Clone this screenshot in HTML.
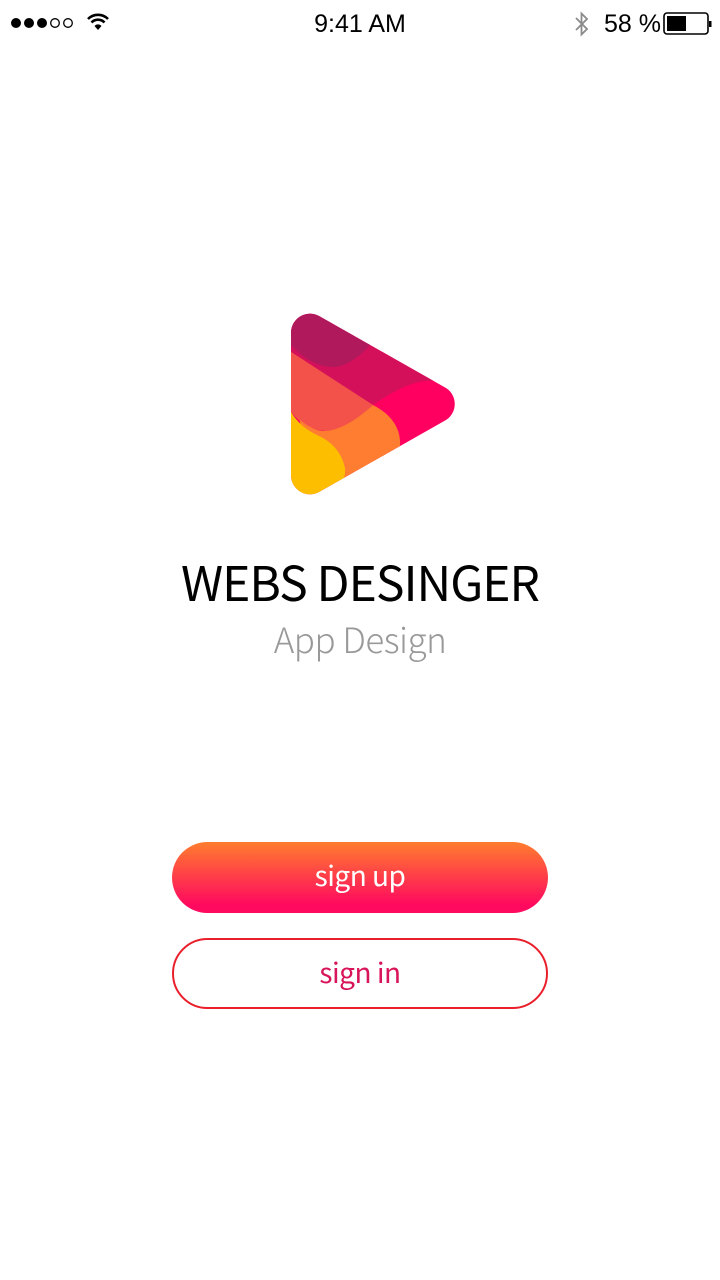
<!DOCTYPE html>
<html><head><meta charset="utf-8">
<style>
html,body{margin:0;padding:0;background:#fff;}
body{width:720px;height:1280px;position:relative;overflow:hidden;font-family:"Liberation Sans",sans-serif;}
.abs{position:absolute;}
.time{left:0;width:720px;top:10px;text-align:center;font-size:25px;color:#000;}
.pct{left:604px;top:10px;font-size:25px;color:#000;}
.title{left:0;width:720px;top:547px;text-align:center;font-family:"Noto Sans CJK SC","Liberation Sans",sans-serif;font-size:48px;color:#000;line-height:66px;letter-spacing:-1px;}
.sub{left:0;width:720px;top:614px;text-align:center;font-family:"Noto Sans CJK SC","Liberation Sans",sans-serif;font-size:35px;font-weight:300;color:#999;line-height:50px;letter-spacing:-0.5px;}
.btn{left:172px;width:376px;height:71px;border-radius:36px;box-sizing:border-box;text-align:center;font-family:"Noto Sans CJK SC","Liberation Sans",sans-serif;font-size:28px;line-height:66px;letter-spacing:-0.5px;}
.up{top:842px;background:linear-gradient(#ff7d2e,#ff0a5e 88%);color:#fff;}
.in{top:938px;border:2px solid #ea1f2c;color:#d8145a;line-height:64px;}
</style></head><body>
<svg class="abs" style="left:10px;top:15px" width="70" height="16">
<circle cx="6" cy="8" r="5" fill="#000"/><circle cx="19" cy="8" r="5" fill="#000"/><circle cx="32" cy="8" r="5" fill="#000"/>
<circle cx="45" cy="8" r="4.3" fill="none" stroke="#000" stroke-width="1.3"/><circle cx="58" cy="8" r="4.3" fill="none" stroke="#000" stroke-width="1.3"/>
</svg>
<svg class="abs" style="left:86px;top:12px" width="24" height="20" viewBox="0 0 24 20">
<path d="M2 7 A14 14 0 0 1 22 7" fill="none" stroke="#000" stroke-width="2.6"/>
<path d="M5.5 10.5 A9 9 0 0 1 18.5 10.5" fill="none" stroke="#000" stroke-width="2.6"/>
<path d="M8.5 14 A4.5 4.5 0 0 1 15.5 14 L12 18 Z" fill="#000"/>
</svg>
<div class="abs time">9:41 AM</div>
<svg class="abs" style="left:572px;top:11px" width="20" height="26" viewBox="0 0 20 26">
<path d="M4 7 L15 18 L9.5 23.5 V2.5 L15 8 L4 19" fill="none" stroke="#8a8a8a" stroke-width="1.8"/>
</svg>
<div class="abs pct">58 %</div>
<svg class="abs" style="left:663px;top:12px" width="50" height="24">
<rect x="1" y="1" width="44" height="21" rx="3" fill="none" stroke="#000" stroke-width="1.6"/>
<rect x="4" y="4" width="19" height="15" fill="#000"/>
<rect x="46" y="9" width="2.5" height="6" fill="#000"/>
</svg>

<svg class="abs" style="left:0;top:0" width="720" height="600">
<defs>
<clipPath id="tri"><path d="M291,333 A19,19 0 0 1 319,316 L446,388 A19,19 0 0 1 446,420 L319,492 A19,19 0 0 1 291,476 Z"/></clipPath>
</defs>
<g clip-path="url(#tri)">
<rect x="280" y="300" width="190" height="210" fill="#ff0061"/>
<path d="M280,300 L470,300 L470,390 L445,384 Q420,372 373,405 L285,350 Z" fill="#d5105b"/>
<path d="M280,300 L380,300 L370,345 Q352,365 335,367 Q312,368 291,345 Z" fill="#b0195c"/>
<path d="M285,348 L373,405 Q345,430 325,431 Q305,430 291,412 Z" fill="#f2524a"/>
<path d="M373,405 Q398,418 400,440 L400,470 L300,510 L300,420 Q315,432 325,431 Q345,430 373,405 Z" fill="#ff7d30"/>
<path d="M280,400 L291,412 Q300,427 317,435 Q340,445 345,468 Q346,485 333,494 L280,505 Z" fill="#fdbe00"/>
</g>
</svg>

<div class="abs title">WEBS DESINGER</div>
<div class="abs sub">App Design</div>
<div class="abs btn up">sign up</div>
<div class="abs btn in">sign in</div>
</body></html>
